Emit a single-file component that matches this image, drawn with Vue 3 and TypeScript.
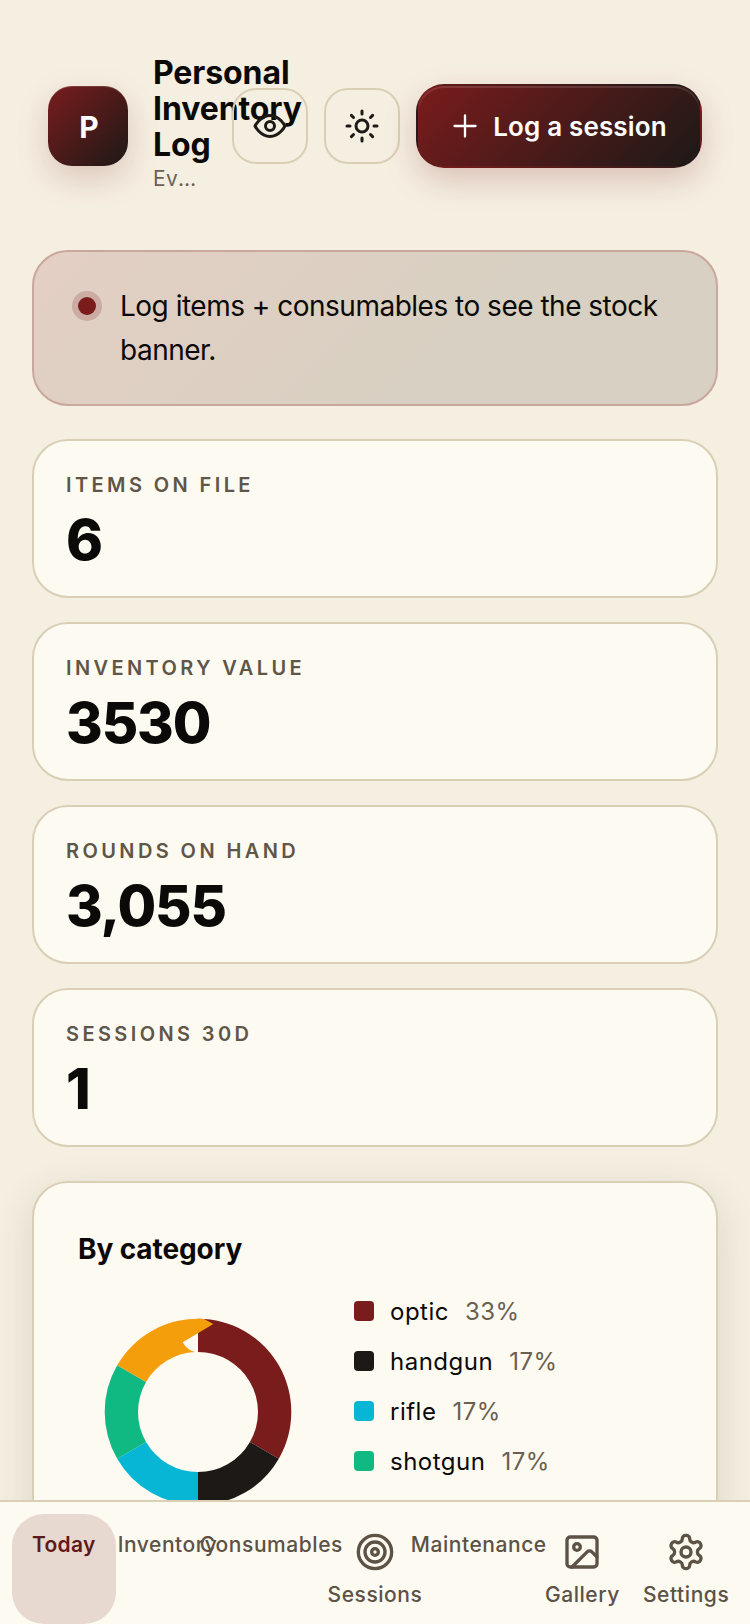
<script setup lang="ts">
type NavItem = { label: string; icon?: "target" | "image" | "gear"; active?: boolean };

const stats = [
  { label: "ITEMS ON FILE", value: "6" },
  { label: "INVENTORY VALUE", value: "3530" },
  { label: "ROUNDS ON HAND", value: "3,055" },
  { label: "SESSIONS 30D", value: "1" },
];

const legend = [
  { name: "optic", pct: "33%", color: "#7a1c1c" },
  { name: "handgun", pct: "17%", color: "#1c1917" },
  { name: "rifle", pct: "17%", color: "#06b6d4" },
  { name: "shotgun", pct: "17%", color: "#10b981" },
  { name: "shell", pct: "17%", color: "#f59e0b" },
];

const nav: NavItem[] = [
  { label: "Today", active: true },
  { label: "Inventory" },
  { label: "Consumables" },
  { label: "Sessions", icon: "target" },
  { label: "Maintenance" },
  { label: "Gallery", icon: "image" },
  { label: "Settings", icon: "gear" },
];

const R = 93.3;
const r = 60;

function pt(rad: number, deg: number) {
  const a = (deg * Math.PI) / 180;
  return `${(rad * Math.sin(a)).toFixed(2)} ${(-rad * Math.cos(a)).toFixed(2)}`;
}

function slice(from: number, to: number) {
  return `M${pt(R, from)}A${R} ${R} 0 0 1 ${pt(R, to)}L${pt(r, to)}A${r} ${r} 0 0 0 ${pt(r, from)}Z`;
}
</script>

<template>
  <div class="page">
    <header class="top">
      <div class="brand">
        <div class="logo">P</div>
        <div class="brand__text">
          <h1>Personal Inventory Log</h1>
          <div class="brand__sub">Every item</div>
        </div>
      </div>
      <div class="actions">
        <button class="icon-btn" aria-label="Hide values">
          <svg width="36" height="36" viewBox="0 0 24 24" fill="none" stroke="#1c1917" stroke-width="2" stroke-linecap="round" stroke-linejoin="round">
            <path d="M2 12s3.6-7 10-7 10 7 10 7-3.6 7-10 7-10-7-10-7Z" />
            <circle cx="12" cy="12" r="3" />
          </svg>
        </button>
        <button class="icon-btn" aria-label="Theme">
          <svg width="36" height="36" viewBox="0 0 24 24" fill="none" stroke="#1c1917" stroke-width="2" stroke-linecap="round" stroke-linejoin="round">
            <circle cx="12" cy="12" r="4" />
            <path d="M12 2v2M12 20v2M4.93 4.93l1.41 1.41M17.66 17.66l1.41 1.41M2 12h2M20 12h2M6.34 17.66l-1.41 1.41M19.07 4.93l-1.41 1.41" />
          </svg>
        </button>
        <button class="log-btn">
          <svg width="28" height="28" viewBox="0 0 24 24" fill="none" stroke="#fff" stroke-width="2" stroke-linecap="round">
            <path d="M12 3v18M3 12h18" />
          </svg>
          <span>Log a session</span>
        </button>
      </div>
    </header>

    <main class="content">
      <div class="notice">
        <span class="notice__dot"></span>
        <p>Log items + consumables to see the stock banner.</p>
      </div>

      <div v-for="s in stats" :key="s.label" class="stat">
        <div class="stat__label">{{ s.label }}</div>
        <div class="stat__value">{{ s.value }}</div>
      </div>

      <section class="chart">
        <h2>By category</h2>
        <div class="chart__body">
          <svg class="donut" width="188" height="188" viewBox="-94 -94 188 188">
            <path :d="slice(0, 120)" fill="#7a1c1c" />
            <path :d="slice(120, 180)" fill="#1c1917" />
            <path :d="slice(180, 240)" fill="#06b6d4" />
            <path :d="slice(240, 300)" fill="#10b981" />
            <path :d="`M${pt(R, 300)}A${R} ${R} 0 0 1 6 -93.1L15.3 -88L-15.3 -69.7Q-11 -62 -3 -60A${r} ${r} 0 0 0 ${pt(r, 300)}Z`" fill="#f59e0b" />
          </svg>
          <ul class="legend">
            <li v-for="l in legend" :key="l.name">
              <span class="swatch" :style="{ background: l.color }"></span>
              <span class="legend__name">{{ l.name }}</span>
              <span class="legend__pct">{{ l.pct }}</span>
            </li>
          </ul>
        </div>
      </section>
    </main>

    <nav class="tabs">
      <a v-for="n in nav" :key="n.label" class="tab" :class="{ 'tab--on': n.active }">
        <svg v-if="n.icon === 'target'" width="40" height="40" viewBox="0 0 24 24" fill="none" stroke="currentColor" stroke-width="2">
          <circle cx="12" cy="12" r="10" />
          <circle cx="12" cy="12" r="6" />
          <circle cx="12" cy="12" r="2" />
        </svg>
        <svg v-else-if="n.icon === 'image'" width="40" height="40" viewBox="0 0 24 24" fill="none" stroke="currentColor" stroke-width="2" stroke-linecap="round" stroke-linejoin="round">
          <rect x="3" y="3" width="18" height="18" rx="2" />
          <circle cx="9" cy="9" r="2" />
          <path d="m21 15-3.09-3.09a2 2 0 0 0-2.82 0L6 21" />
        </svg>
        <svg v-else-if="n.icon === 'gear'" width="40" height="40" viewBox="0 0 24 24" fill="none" stroke="currentColor" stroke-width="2" stroke-linecap="round" stroke-linejoin="round">
          <path d="M12.22 2h-.44a2 2 0 0 0-2 2v.18a2 2 0 0 1-1 1.73l-.43.25a2 2 0 0 1-2 0l-.15-.08a2 2 0 0 0-2.73.73l-.22.38a2 2 0 0 0 .73 2.73l.15.1a2 2 0 0 1 1 1.72v.51a2 2 0 0 1-1 1.74l-.15.09a2 2 0 0 0-.73 2.73l.22.38a2 2 0 0 0 2.73.73l.15-.08a2 2 0 0 1 2 0l.43.25a2 2 0 0 1 1 1.73V20a2 2 0 0 0 2 2h.44a2 2 0 0 0 2-2v-.18a2 2 0 0 1 1-1.73l.43-.25a2 2 0 0 1 2 0l.15.08a2 2 0 0 0 2.73-.73l.22-.39a2 2 0 0 0-.73-2.73l-.15-.08a2 2 0 0 1-1-1.74v-.5a2 2 0 0 1 1-1.74l.15-.09a2 2 0 0 0 .73-2.73l-.22-.38a2 2 0 0 0-2.73-.73l-.15.08a2 2 0 0 1-2 0l-.43-.25a2 2 0 0 1-1-1.73V4a2 2 0 0 0-2-2z" />
          <circle cx="12" cy="12" r="3" />
        </svg>
        <span class="tab__label">{{ n.label }}</span>
      </a>
    </nav>
  </div>
</template>

<style>
html,
body {
  margin: 0;
  background: #f5efe2;
  overflow: hidden;
}
</style>

<style scoped>
.page {
  height: 1624px;
  overflow: hidden;
  position: relative;
  background: #f5efe2;
  color: #0c0a09;
  font-family: Inter, "Liberation Sans", sans-serif;
}
.top {
  display: flex;
  align-items: center;
  gap: 24px;
  padding: 56px 48px 0;
  height: 140px;
  box-sizing: content-box;
  margin-bottom: 54px;
}
.brand {
  flex: 1;
  min-width: 0;
  display: flex;
  align-items: center;
  gap: 25px;
}
.logo {
  flex: none;
  width: 80px;
  height: 80px;
  box-sizing: border-box;
  padding: 2px 0 0 2px;
  border-radius: 24px;
  background: linear-gradient(135deg, #7a1c1c, #1c1917);
  color: #fff;
  font-weight: 700;
  font-size: 30px;
  display: flex;
  align-items: center;
  justify-content: center;
  box-shadow: 0 12px 32px rgba(122, 28, 28, 0.2), inset 0 1px 0 rgba(255, 255, 255, 0.14);
}
.brand__text {
  min-width: 0;
  flex: 1;
  padding-bottom: 4px;
}
h1 {
  margin: 0;
  font-size: 32px;
  line-height: 36px;
  font-weight: 700;
  letter-spacing: -0.1px;
}
.brand__sub {
  margin-top: 2px;
  font-size: 21px;
  line-height: 28px;
  letter-spacing: 0.5px;
  color: #6b5f50;
  white-space: nowrap;
  overflow: hidden;
  text-overflow: ellipsis;
}
.actions {
  flex: none;
  display: flex;
  align-items: center;
  gap: 16px;
}
.icon-btn {
  width: 76px;
  height: 76px;
  padding: 0;
  border: 2px solid #d8cfb4;
  border-radius: 24px;
  background: transparent;
  display: flex;
  align-items: center;
  justify-content: center;
}
.log-btn {
  height: 84px;
  width: 286px;
  padding: 0;
  border: 2px solid transparent;
  border-radius: 28px;
  background: linear-gradient(135deg, #7a1c1c, #1c1917);
  color: #fff;
  font-family: inherit;
  font-size: 26px;
  font-weight: 600;
  letter-spacing: 0.15px;
  display: flex;
  align-items: center;
  justify-content: center;
  gap: 14px;
  box-shadow: 0 12px 32px rgba(122, 28, 28, 0.22), inset 0 2px 0 rgba(255, 255, 255, 0.12);
}
.content {
  padding: 0 32px;
  display: flex;
  flex-direction: column;
  gap: 24px;
}
.notice {
  display: flex;
  align-items: flex-start;
  gap: 16px;
  padding: 32px 36px;
  height: 156px;
  box-sizing: border-box;
  margin-bottom: 9px;
  border: 2px solid #c9a79c;
  border-radius: 36px;
  background: linear-gradient(135deg, #e4cfc4, #d8d0c2 60%);
}
.notice p {
  margin: 0;
  font-size: 28px;
  line-height: 44px;
  letter-spacing: -0.5px;
}
.notice__dot {
  flex: none;
  width: 18px;
  height: 18px;
  margin: 13px 8px 0 8px;
  border-radius: 50%;
  background: #7a1c1c;
  box-shadow: 0 0 0 6px rgba(122, 28, 28, 0.2);
}
.stat {
  box-sizing: border-box;
  height: 159px;
  padding: 32px 32px 0;
  background: #fdfaf2;
  border: 2px solid #d8cfb4;
  border-radius: 36px;
}
.stat__label {
  font-size: 20px;
  line-height: 24px;
  font-weight: 600;
  letter-spacing: 3.4px;
  color: #5f5647;
}
.stat__value {
  font-size: 56px;
  line-height: 64px;
  font-weight: 850;
  letter-spacing: -1.1px;
  margin-top: 11px;
}
.chart {
  margin-top: 10px;
  height: 420px;
  box-sizing: border-box;
  padding: 46px 44px 0;
  background: #fdfaf2;
  border: 2px solid #d8cfb4;
  border-radius: 36px;
  box-shadow: 0 12px 40px rgba(60, 50, 30, 0.14);
}
h2 {
  margin: 0;
  font-size: 28px;
  line-height: 40px;
  font-weight: 700;
  letter-spacing: -0.1px;
}
.chart__body {
  display: flex;
  align-items: flex-start;
  margin-top: 24px;
}
.donut {
  flex: none;
  margin: 25px 0 0 26px;
}
.legend {
  list-style: none;
  margin: 0 0 0 62px;
  padding: 0;
  display: flex;
  flex-direction: column;
  gap: 14px;
}
.legend li {
  display: flex;
  align-items: center;
  height: 36px;
  font-size: 24px;
  letter-spacing: 0.5px;
}
.swatch {
  width: 20px;
  height: 20px;
  border-radius: 4px;
  margin-right: 16px;
}
.legend__pct {
  margin-left: 16px;
  color: #6b5f50;
}
.tabs {
  position: absolute;
  left: 0;
  right: 0;
  bottom: 0;
  height: 124px;
  box-sizing: border-box;
  padding: 12px 12px 0;
  background: #fdfaf2;
  border-top: 2px solid #d8cfb4;
  display: grid;
  grid-template-columns: repeat(7, minmax(0, 1fr));
}
.tab {
  display: flex;
  flex-direction: column;
  align-items: center;
  gap: 9px;
  padding-top: 17px;
  border-radius: 32px;
  color: #5c5245;
  font-size: 21px;
  font-weight: 500;
}
.tab svg {
  margin-top: 1px;
}
.tab__label {
  white-space: nowrap;
  letter-spacing: 0.55px;
  line-height: 28px;
}
.tab--on {
  background: #e7d8d0;
  color: #5e1a1a;
  font-weight: 600;
}
.tab--on .tab__label {
  letter-spacing: 0.3px;
}
</style>
